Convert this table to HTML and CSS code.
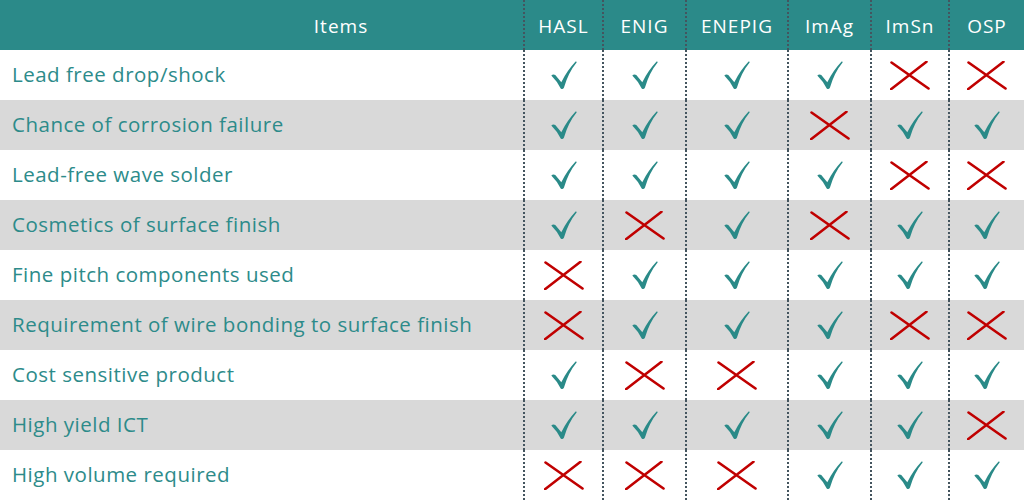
FILE: index.html
```html
<!DOCTYPE html>
<html>
<head>
<meta charset="utf-8">
<link rel="stylesheet" href="styles.css">
</head>
<body>
<svg width="0" height="0" class="defs">
  <defs>
    <symbol id="ok" viewBox="0 0 26 29">
      <path d="M0.3,14.6 Q2.2,12.6 4.3,14.1 L10.3,21.2 Q16.2,9.5 24.6,0.6 Q25.8,0.2 25.6,1.6 Q17.4,11.5 12.9,26.8 Q11.6,28.9 9.7,27.5 Q6.3,20.6 0.3,14.6 Z" fill="#2a8a88"/>
    </symbol>
    <symbol id="no" viewBox="0 0 40 29">
      <path d="M1.5,1.5 L38.5,27.5 M36.5,0.8 L1,28.2" stroke="#c00000" stroke-width="2.6" stroke-linecap="round" fill="none"/>
    </symbol>
  </defs>
</svg>
<div class="table" id="t"></div>
<script>
const cols = ["HASL","ENIG","ENEPIG","ImAg","ImSn","OSP"];
const rows = [
  ["Lead free drop/shock", "111100"],
  ["Chance of corrosion failure", "111011"],
  ["Lead-free wave solder", "111100"],
  ["Cosmetics of surface finish", "101011"],
  ["Fine pitch components used", "011111"],
  ["Requirement of wire bonding to surface finish", "011100"],
  ["Cost sensitive product", "100111"],
  ["High yield ICT", "111110"],
  ["High volume required", "000111"]
];
let h = '<div class="hd first">Items</div>';
cols.forEach(c => h += '<div class="hd sep">' + c + '</div>');
rows.forEach((r, i) => {
  const cls = i % 2 ? 'alt' : '';
  h += '<div class="cell label ' + cls + '">' + r[0] + '</div>';
  for (const v of r[1]) {
    const ic = v === '1'
      ? '<svg class="ok" width="26" height="29"><use href="#ok"/></svg>'
      : '<svg class="no" width="40" height="29"><use href="#no"/></svg>';
    h += '<div class="cell mark sep ' + cls + '">' + ic + '</div>';
  }
});
document.getElementById('t').innerHTML = h;
</script>
</body>
</html>
```
FILE: styles.css
```css
html, body {
  margin: 0;
  padding: 0;
  background: #ffffff;
}
.defs {
  position: absolute;
  width: 0;
  height: 0;
}
.table {
  display: grid;
  grid-template-columns: 523px 79px 83px 102px 83px 78px 76px;
  grid-auto-rows: 50px;
  width: 1024px;
  font-family: "Open Sans", "DejaVu Sans", sans-serif;
}
.hd {
  background: #2b8a89;
  color: #ffffff;
  font-size: 19px;
  letter-spacing: 1px;
  display: flex;
  align-items: center;
  justify-content: center;
  padding-top: 1px;
  box-sizing: border-box;
}
.hd.first {
  padding-left: 159px;
}
.sep {
  border-left: 2px dotted #44555f;
  box-sizing: border-box;
}
.cell {
  background: #ffffff;
}
.cell.alt {
  background: #d9d9d9;
}
.label {
  color: #2d8b8a;
  font-size: 20.5px;
  letter-spacing: 0.5px;
  display: flex;
  align-items: center;
  padding-left: 12px;
  padding-bottom: 3px;
  box-sizing: border-box;
  white-space: nowrap;
}
.mark {
  display: flex;
  align-items: center;
  justify-content: center;
}
.mark svg {
  display: block;
}
```
